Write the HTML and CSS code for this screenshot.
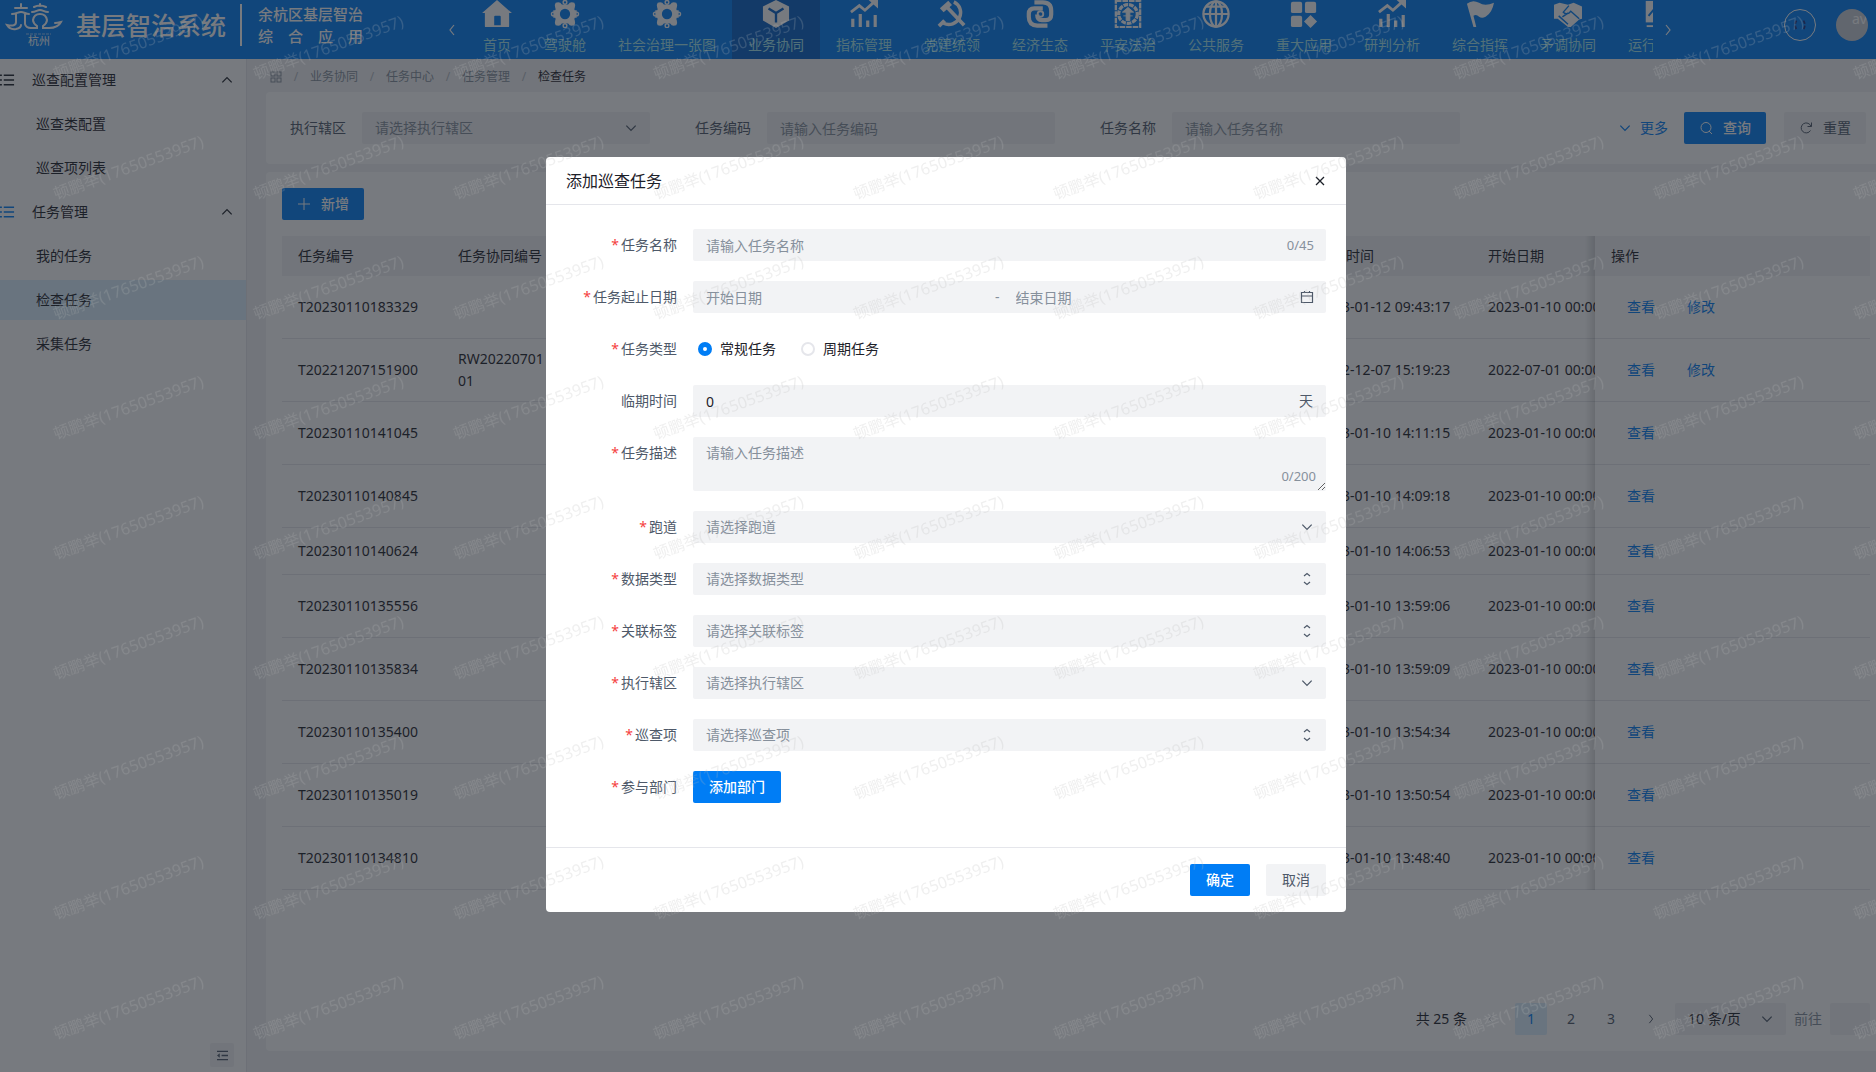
FILE: index.html
```html
<!DOCTYPE html>
<html lang="zh-CN">
<head>
<meta charset="utf-8">
<meta name="viewport" content="width=device-width, initial-scale=1">
<title>基层智治系统</title>
<link rel="stylesheet" href="styles.css">
</head>
<body>
<svg class="sprite" aria-hidden="true">
  <symbol id="i-down" viewBox="0 0 12 12"><path d="M2 4l4 4 4-4" fill="none" stroke="currentColor" stroke-width="1.1"/></symbol>
  <symbol id="i-up" viewBox="0 0 12 12"><path d="M2 8l4-4 4 4" fill="none" stroke="currentColor" stroke-width="1.1"/></symbol>
  <symbol id="i-left" viewBox="0 0 12 12"><path d="M8 1L4 6l4 5" fill="none" stroke="currentColor" stroke-width="1.2"/></symbol>
  <symbol id="i-right" viewBox="0 0 12 12"><path d="M4 1l4 5-4 5" fill="none" stroke="currentColor" stroke-width="1.2"/></symbol>
  <symbol id="i-updown" viewBox="0 0 14 18"><path d="M4 6l3-2.500L10 6M4 12l3 2.500 3-2.500" fill="none" stroke="currentColor" stroke-width="1.2"/></symbol>
  <symbol id="i-list" viewBox="0 0 16 14"><path d="M0 2h2M4 2h11M0 7h2M4 7h11M0 12h2M4 12h11" stroke="currentColor" stroke-width="1.6"/></symbol>
  <symbol id="i-gear" viewBox="0 0 30 30"><path fill="currentColor" fill-rule="evenodd" d="M5 3q3-1 5 0 1 2 3 2h4q2 0 3-2 2-1 5 0 1.500 2 .5 5-1 2 0 3h2v8h-2q-1 1 0 3 1 3-.5 5-3 1-5 0-1-2-3-2h-4q-2 0-3 2-2 1-5 0-1.500-2-.5-5 1-2 0-3h-2v-8h2q1-1 0-3-1-3 .5-5zM15 9.500a5.500 5.500 0 100 11 5.500 5.500 0 000-11z"/><g fill="none" stroke="currentColor" stroke-width="1.500"><circle cx="2.500" cy="15" r="2"/><circle cx="27.500" cy="15" r="2"/><circle cx="15" cy="2.500" r="2"/><circle cx="15" cy="27.500" r="2"/></g></symbol>
  <symbol id="i-chart" viewBox="0 0 30 30"><path d="M3 29V20M11 29V15M19 29V22M27 29V16" stroke="currentColor" stroke-width="3.400" fill="none"/><path d="M1 13l9-7 6 5 10-9" stroke="currentColor" stroke-width="3" fill="none"/><path d="M20 0h10v9z" fill="currentColor"/></symbol>
</svg>

<header class="topbar">
  <div class="brand">
    <svg class="brand-logo" viewBox="0 0 56 44" aria-hidden="true">
      <g fill="none" stroke="currentColor" stroke-width="2" stroke-linecap="round">
        <path d="M9 5h12M15 1v4M6 11c4 0 6-2 9-2s5 2 8 2M10 11v8q0 5-9 3 3 5 9 4 5-1 5-4M19 11v10q1 4 6 4"/>
        <path d="M28 4q6-3 12 0M34 1v2M26 9c4 0 5-2 8-2s4 2 8 2"/>
        <path d="M25 25h6v-2q-4-3-4-6 1-6 7-6t7 6q0 3-4 6v2h6q9 0 12-6-4 1-6 1"/>
      </g>
      <path d="M20 31h25" stroke="currentColor" stroke-width="1" stroke-dasharray="3 1" opacity=".6"/>
      <text x="22" y="42" class="logo-city">杭州</text>
    </svg>
    <strong class="brand-title">基层智治系统</strong>
    <div class="brand-sub">
      <span>余杭区基层智治</span>
      <span class="spread"><span>综</span><span>合</span><span>应</span><span>用</span></span>
    </div>
  </div>
  <button class="nav-arrow prev" aria-label="向左"><svg><use href="#i-left"/></svg></button>
  <nav class="nav">
    <a href="#"><svg viewBox="0 0 32 30"><path fill="currentColor" fill-rule="evenodd" d="M16 0L32 14h-3v14q0 1-1 1H4q-1 0-1-1V14H0zM14 17q-1 0-1 1v9h7v-9q0-1-1-1z"/></svg>首页</a>
    <a href="#"><svg><use href="#i-gear"/></svg>驾驶舱</a>
    <a href="#"><svg><use href="#i-gear"/></svg>社会治理一张图</a>
    <a href="#" class="active"><svg viewBox="0 0 30 30"><path fill="currentColor" d="M15 0l14 7v15l-14 8L1 22V7z"/><path class="cut" d="M7 9l8 5 8-5M15 14v10" fill="none" stroke-width="2.500"/></svg>业务协同</a>
    <a href="#"><svg><use href="#i-chart"/></svg>指标管理</a>
    <a href="#"><svg viewBox="0 0 30 30"><g fill="none" stroke="currentColor"><path d="M17 2a12.500 12.500 0 11-11 23" stroke-width="3.600"/><path d="M4 11l9-8" stroke-width="6"/><path d="M10 8l18 19" stroke-width="4"/><path d="M1 28l6-6" stroke-width="4"/></g></svg>党建统领</a>
    <a href="#"><svg viewBox="0 0 30 30"><g fill="none" stroke="currentColor" stroke-width="4.500"><path d="M9 2.500h9q9 0 9 9v4q0 6-6 6h-4q-5 0-5-6"/><path d="M18 9H9q-6 0-6 6v3q0 9 9 9.500h11"/></g><circle cx="15.500" cy="15" r="3" fill="none" stroke="currentColor" stroke-width="2"/></svg>经济生态</a>
    <a href="#"><svg viewBox="0 0 30 30"><rect x="2" y="1" width="26" height="28" fill="none" stroke="currentColor" stroke-width="2.500" stroke-dasharray="6 1"/><circle cx="15" cy="15" r="10" fill="none" stroke="currentColor" stroke-width="3.500" stroke-dasharray="5 1"/><path d="M15 8l6 5h-4v9h-4v-9H9zM10 17h10" fill="currentColor" stroke="currentColor"/></svg>平安法治</a>
    <a href="#"><svg viewBox="0 0 30 30"><g fill="none" stroke="currentColor" stroke-width="2.400"><circle cx="15" cy="15" r="13.500"/><ellipse cx="15" cy="15" rx="6.500" ry="13.500"/><path d="M15 1v28M1 15h28M4 7h22"/></g></svg>公共服务</a>
    <a href="#"><svg viewBox="0 0 30 30"><g fill="currentColor"><rect x="1" y="2" width="12" height="12" rx="2"/><rect x="16" y="2" width="12" height="12" rx="2"/><rect x="1" y="17" width="12" height="12" rx="2"/><path d="M22 16l7 7-7 7-7-7z"/></g></svg>重大应用</a>
    <a href="#"><svg><use href="#i-chart"/></svg>研判分析</a>
    <a href="#"><svg viewBox="0 0 30 30"><path fill="currentColor" d="M1 4q6-5 13-1 6 4 16 0-2 11-9 15-4 2-7 0-3-3-6-1l3 12H8z"/></svg>综合指挥</a>
    <a href="#"><svg viewBox="0 0 30 30"><path fill="currentColor" d="M0 5l6-2 9 2 6-2 9 4v13l-3 1-9 8h-3L4 20H0z"/><path d="M16 6l-6 7q4 4 8-1l9 8M5 17l10 9M9 18l6-4" class="cutline" fill="none" stroke-width="1.500"/></svg>矛调协同</a>
    <a href="#" class="wide"><svg viewBox="0 0 30 30"><path fill="currentColor" d="M4 1h22v23H4z"/><path class="cutline" d="M7 17l5-6 5 7 6-8" fill="none" stroke-width="2"/><path d="M5 28h20" stroke="currentColor" stroke-width="2"/></svg><span>运行</span></a>
  </nav>
  <button class="nav-arrow next" aria-label="向右"><svg><use href="#i-right"/></svg></button>
  <div class="user">
    <button class="round" aria-label="全屏"><svg viewBox="0 0 16 16"><path d="M4 3q-3 5 0 10M12 3q3 5 0 10" fill="none" stroke="currentColor" stroke-width="2" stroke-dasharray="4 2"/></svg></button>
    <span class="avatar"><span>av</span></span>
  </div>
</header>

<div class="layout">
  <aside class="sidebar">
    <button class="group"><svg class="list"><use href="#i-list"/></svg><span>巡查配置管理</span><svg class="chev"><use href="#i-up"/></svg></button>
    <a href="#">巡查类配置</a>
    <a href="#">巡查项列表</a>
    <button class="group"><svg class="list blue"><use href="#i-list"/></svg><span>任务管理</span><svg class="chev"><use href="#i-up"/></svg></button>
    <a href="#">我的任务</a>
    <a href="#" class="selected">检查任务</a>
    <a href="#">采集任务</a>
    <button class="collapse" aria-label="收起菜单"><svg viewBox="0 0 12 12"><path d="M0 1.500h12M5 6h7M0 10.500h12" stroke="currentColor" stroke-width="1.400"/><path d="M0 6l3-2.500v5z" fill="currentColor"/></svg></button>
  </aside>

  <main class="main">
    <nav class="crumbs">
      <svg viewBox="0 0 12 12"><g fill="none" stroke="currentColor"><rect x="1" y="1" width="4" height="4"/><rect x="7" y="1" width="4" height="4"/><rect x="1" y="7" width="4" height="4"/><rect x="7" y="7" width="4" height="4"/></g></svg>
      <i>/</i><a href="#">业务协同</a><i>/</i><a href="#">任务中心</a><i>/</i><a href="#">任务管理</a><i>/</i><b>检查任务</b>
    </nav>

    <form class="filters">
      <div class="filter"><label for="f-area">执行辖区</label><span class="control"><select id="f-area"><option>请选择执行辖区</option></select><svg class="arrow"><use href="#i-down"/></svg></span></div>
      <div class="filter"><label for="f-code">任务编码</label><span class="control"><input id="f-code" placeholder="请输入任务编码"></span></div>
      <div class="filter"><label for="f-name">任务名称</label><span class="control"><input id="f-name" placeholder="请输入任务名称"></span></div>
      <div class="filter-actions">
        <button type="button" class="more"><svg><use href="#i-down"/></svg>更多</button>
        <button type="button" class="btn primary icon"><svg viewBox="0 0 14 14"><circle cx="7" cy="6.500" r="5" fill="none" stroke="currentColor"/><path d="M10 10l3 3" stroke="currentColor"/></svg>查询</button>
        <button type="button" class="btn icon"><svg viewBox="0 0 14 14"><path d="M11.500 9.500a5 5 0 11.500-4M12.500 1.500v4h-4" fill="none" stroke="currentColor"/></svg>重置</button>
      </div>
    </form>

    <section class="panel">
      <div><button class="btn primary icon"><svg viewBox="0 0 14 14"><path d="M7 1v12M1 7h12" stroke="currentColor"/></svg>新增</button></div>
      <div class="table-wrap">
        <table>
          <colgroup><col class="c-code"><col class="c-code"><col><col class="c-time"><col class="c-time"><col class="c-act"></colgroup>
          <thead><tr><th>任务编号</th><th>任务协同编号</th><th></th><th>更新时间</th><th>开始日期</th><th class="act">操作</th></tr></thead>
          <tbody>
            <tr><td>T20230110183329</td><td></td><td></td><td>2023-01-12 09:43:17</td><td>2023-01-10 00:00:00</td><td class="act"><a href="#">查看</a><a href="#">修改</a></td></tr>
            <tr><td>T20221207151900</td><td>RW20220701<br>01</td><td></td><td>2022-12-07 15:19:23</td><td>2022-07-01 00:00:00</td><td class="act"><a href="#">查看</a><a href="#">修改</a></td></tr>
            <tr><td>T20230110141045</td><td></td><td></td><td>2023-01-10 14:11:15</td><td>2023-01-10 00:00:00</td><td class="act"><a href="#">查看</a></td></tr>
            <tr><td>T20230110140845</td><td></td><td></td><td>2023-01-10 14:09:18</td><td>2023-01-10 00:00:00</td><td class="act"><a href="#">查看</a></td></tr>
            <tr class="short"><td>T20230110140624</td><td></td><td></td><td>2023-01-10 14:06:53</td><td>2023-01-10 00:00:00</td><td class="act"><a href="#">查看</a></td></tr>
            <tr><td>T20230110135556</td><td></td><td></td><td>2023-01-10 13:59:06</td><td>2023-01-10 00:00:00</td><td class="act"><a href="#">查看</a></td></tr>
            <tr><td>T20230110135834</td><td></td><td></td><td>2023-01-10 13:59:09</td><td>2023-01-10 00:00:00</td><td class="act"><a href="#">查看</a></td></tr>
            <tr><td>T20230110135400</td><td></td><td></td><td>2023-01-10 13:54:34</td><td>2023-01-10 00:00:00</td><td class="act"><a href="#">查看</a></td></tr>
            <tr><td>T20230110135019</td><td></td><td></td><td>2023-01-10 13:50:54</td><td>2023-01-10 00:00:00</td><td class="act"><a href="#">查看</a></td></tr>
            <tr><td>T20230110134810</td><td></td><td></td><td>2023-01-10 13:48:40</td><td>2023-01-10 00:00:00</td><td class="act"><a href="#">查看</a></td></tr>
          </tbody>
        </table>
      </div>
      <div class="pager">
        <span class="total">共 25 条</span>
        <button class="page" disabled aria-label="上一页"><svg><use href="#i-left"/></svg></button>
        <button class="page current">1</button>
        <button class="page">2</button>
        <button class="page">3</button>
        <button class="page" aria-label="下一页"><svg><use href="#i-right"/></svg></button>
        <span class="control size"><select aria-label="每页条数"><option>10 条/页</option></select><svg class="arrow"><use href="#i-down"/></svg></span>
        <label class="jump">前往<input></label>
      </div>
    </section>
  </main>
</div>

<div class="mask">
  <section class="modal" role="dialog" aria-labelledby="dlg-title">
    <header class="modal-head"><h2 id="dlg-title">添加巡查任务</h2><button class="close" aria-label="关闭"><svg viewBox="0 0 12 12"><path d="M2 2l8 8M10 2l-8 8" stroke="currentColor" stroke-width="1.300"/></svg></button></header>
    <form class="modal-body">
      <div class="row"><label class="req" for="m-name">任务名称</label><span class="control"><input id="m-name" placeholder="请输入任务名称"><span class="count">0/45</span></span></div>
      <div class="row"><label class="req" for="m-start">任务起止日期</label><span class="control range"><input id="m-start" placeholder="开始日期"><span>-</span><input placeholder="结束日期" aria-label="结束日期"><svg class="cal" viewBox="0 0 14 14"><path d="M1.500 2.500h11v10h-11zM1.500 6h11M4.500 1v2M9.500 1v2" fill="none" stroke="currentColor" stroke-width="1.200"/></svg></span></div>
      <div class="row"><span class="label req">任务类型</span><div class="radios"><label><input type="radio" name="type" checked>常规任务</label><label><input type="radio" name="type">周期任务</label></div></div>
      <div class="row"><label for="m-due">临期时间</label><span class="control"><input id="m-due" value="0"><span class="unit">天</span></span></div>
      <div class="row"><label class="req" for="m-desc">任务描述</label><span class="control area"><textarea id="m-desc" placeholder="请输入任务描述"></textarea><span class="count">0/200</span></span></div>
      <div class="row"><label class="req" for="m-track">跑道</label><span class="control"><select id="m-track"><option>请选择跑道</option></select><svg class="arrow"><use href="#i-down"/></svg></span></div>
      <div class="row"><label class="req" for="m-data">数据类型</label><span class="control"><select id="m-data"><option>请选择数据类型</option></select><svg class="arrow tall"><use href="#i-updown"/></svg></span></div>
      <div class="row"><label class="req" for="m-tag">关联标签</label><span class="control"><select id="m-tag"><option>请选择关联标签</option></select><svg class="arrow tall"><use href="#i-updown"/></svg></span></div>
      <div class="row"><label class="req" for="m-area">执行辖区</label><span class="control"><select id="m-area"><option>请选择执行辖区</option></select><svg class="arrow"><use href="#i-down"/></svg></span></div>
      <div class="row"><label class="req" for="m-item">巡查项</label><span class="control"><select id="m-item"><option>请选择巡查项</option></select><svg class="arrow tall"><use href="#i-updown"/></svg></span></div>
      <div class="row"><span class="label req">参与部门</span><button type="button" class="btn primary">添加部门</button></div>
    </form>
    <footer class="modal-foot"><button class="btn primary">确定</button><button class="btn">取消</button></footer>
  </section>
</div>

<svg class="watermark" aria-hidden="true">
  <defs><pattern id="wm" x="30" y="0" width="200" height="120" patternUnits="userSpaceOnUse">
    <text transform="translate(26 80) rotate(-20)">顿鹏举(17650553957)</text>
  </pattern></defs>
  <rect x="30" width="100%" height="100%" fill="url(#wm)"/>
</svg>
</body>
</html>
```
FILE: styles.css
```css
:root {
  --primary: #007df5;
  --text: #1d2129;
  --text-2: #4e5969;
  --text-3: #86909c;
  --fill: #f2f3f5;
  --line: #e5e6eb;
  --mask: rgba(29, 33, 41, 0.6);
}

* { box-sizing: border-box; }

body {
  margin: 0;
  height: 100vh;
  display: flex;
  flex-direction: column;
  overflow: hidden;
  font: 14px/22px "Noto Sans", "Noto Sans CJK SC", sans-serif;
  color: var(--text);
}

button, input, select, textarea { font: inherit; color: inherit; border: 0; margin: 0; background: none; }
button { padding: 0; cursor: pointer; }
a { color: inherit; text-decoration: none; }
svg { display: block; flex: none; }
.sprite { position: absolute; width: 0; height: 0; }

/* top bar */
.topbar { flex: none; height: 59px; display: flex; background: var(--primary); color: #fff; }
.brand { width: 446px; height: 50px; flex: none; display: flex; align-items: center; padding-left: 6px; }
.brand-logo { width: 56px; height: 44px; overflow: visible; }
.logo-city { font-size: 11px; fill: currentColor; }
.brand-title { margin-left: 14px; padding-right: 14px; border-right: 2px solid #fff; font-size: 25px; line-height: 42px; font-weight: 500; }
.brand-sub { margin-left: 16px; display: flex; flex-direction: column; font-size: 15px; font-weight: 500; }
.spread { display: flex; justify-content: space-between; }
.nav-arrow { flex: none; display: flex; align-items: center; }
.nav-arrow svg { width: 12px; height: 12px; }
.prev { width: 20px; }
.next { width: 31px; padding-left: 9px; }
.nav { flex: 1; min-width: 0; display: flex; overflow: hidden; }
.nav a { flex: none; display: flex; flex-direction: column; align-items: center; gap: 6px; padding: 0 16px; color: #a2e6f0; }
.nav .wide { width: 88px; }
.wide span { align-self: flex-start; }
.nav svg { width: 30px; height: 28px; color: #fff; }
.nav .active { background: #055fc6; }
.cut { stroke: #055fc6; }
.cutline { stroke: var(--primary); }
.user { width: 192px; height: 50px; flex: none; display: flex; align-items: center; justify-content: flex-end; gap: 20px; padding-right: 8px; }
.round { width: 32px; height: 32px; display: grid; place-items: center; border: 1px solid #fff; border-radius: 50%; color: #1d2f7a; }
.round svg { width: 14px; height: 14px; }
.avatar { width: 32px; height: 32px; border-radius: 50%; background: #c9cdd4; color: #fff; overflow: hidden; line-height: 20px; }
.avatar span { display: block; padding-left: 16px; }

/* side menu */
.layout { flex: 1; min-height: 0; display: flex; background: var(--fill); }
.sidebar { width: 247px; flex: none; display: flex; flex-direction: column; gap: 4px; padding: 1px 0 5px; background: #fff; border-right: 1px solid var(--line); }
.sidebar a { padding: 9px 36px; }
.sidebar .selected { background: #dcf1ff; }
.group { height: 40px; display: flex; align-items: center; padding-right: 12px; text-align: left; }
.group span { flex: 1; padding-left: 17px; }
.list { width: 15px; height: 14px; }
.blue { color: var(--primary); }
.chev { width: 14px; height: 14px; }
.collapse { width: 24px; height: 24px; margin: auto 12px 0 auto; display: grid; place-items: center; background: var(--fill); border-radius: 2px; color: var(--text-2); }
.collapse svg { width: 11px; height: 11px; }

/* content */
.main { flex: 1; min-width: 0; display: flex; flex-direction: column; padding: 0 0 21px 19px; }
.crumbs { height: 33px; display: flex; align-items: center; padding: 2px 0 0 4px; font-size: 12px; color: var(--text-3); }
.crumbs svg { width: 12px; height: 12px; }
.crumbs i { width: 28px; text-align: center; font-style: normal; color: #b5bac2; }
.crumbs b { font-weight: 400; color: var(--text); }

.control { position: relative; display: flex; align-items: center; min-width: 0; height: 32px; background: var(--fill); border-radius: 2px; }
.control input, .control select { flex: 1; width: 100%; min-width: 0; height: 32px; padding: 0 13px; appearance: none; outline: 0; }
.control select { color: var(--text-3); }
::placeholder { color: var(--text-3); opacity: 1; }
.arrow { position: absolute; right: 12px; width: 14px; height: 14px; color: var(--text-2); pointer-events: none; }
.tall { height: 18px; }

.btn { height: 32px; padding: 0 16px; border-radius: 2px; background: var(--fill); color: var(--text-2); }
.primary { background: var(--primary); color: #fff; font-weight: 500; }
.icon { display: inline-flex; align-items: center; gap: 10px; padding: 0 15px; }
.icon svg { width: 14px; height: 14px; }

.filters { display: flex; align-items: center; gap: 45px; padding: 20px 10px 20px 24px; background: #fff; border-radius: 4px 0 0 4px; }
.filter { display: flex; align-items: center; gap: 16px; color: var(--text-2); }
.filter .control { width: 288px; color: var(--text); }
.filter-actions { margin-left: auto; display: flex; align-items: center; }
.filter-actions .primary { margin: 0 18px 0 16px; }
.more { display: flex; align-items: center; gap: 8px; color: var(--primary); }
.more svg { width: 14px; height: 14px; }

.panel { flex: 1; margin-top: 8px; display: flex; flex-direction: column; padding: 16px 6px 16px 16px; background: #fff; border-radius: 4px 0 0 4px; }
.table-wrap { margin-top: 16px; overflow: hidden; }
table { width: calc(100% + 47px); table-layout: fixed; border-collapse: separate; border-spacing: 0; }
.c-code { width: 160px; }
.c-time { width: 170px; }
.c-act { width: 275px; }
th { height: 40px; padding: 0 16px; text-align: left; font-weight: 400; background: var(--fill); }
td { height: 63px; padding: 0 16px; border-bottom: 1px solid var(--line); white-space: nowrap; }
.short td { height: 47px; }
td.act, th.act { position: sticky; right: 0; }
td.act { background: #fff; padding-left: 32px; }
.act::before { content: ""; position: absolute; top: 0; bottom: 0; left: -10px; width: 10px; background: linear-gradient(to left, rgba(0, 0, 0, 0.14), transparent); }
td.act::before { bottom: -1px; }
.act a { margin-right: 32px; color: var(--primary); }

.pager { margin-top: auto; display: flex; align-items: center; justify-content: flex-end; gap: 8px; }
.page { width: 32px; height: 32px; display: grid; place-items: center; border-radius: 2px; color: var(--text-2); }
.page svg { width: 12px; height: 10px; }
.page:disabled { color: #c9cdd4; }
.current { background: #dcf1ff; color: var(--primary); }
.size { width: 111px; }
.size select { color: var(--text); }
.jump { display: flex; align-items: center; gap: 8px; color: var(--text-3); }
.jump input { width: 40px; height: 32px; background: var(--fill); border-radius: 2px; }

/* dialog */
.mask { position: fixed; inset: 0; display: flex; justify-content: center; align-items: flex-start; padding: 157px 0 24px 16px; background: var(--mask); }
.modal { width: 800px; max-width: 100%; background: #fff; border-radius: 4px; }
.modal-head { height: 48px; display: flex; align-items: center; justify-content: space-between; padding: 0 20px; border-bottom: 1px solid var(--line); }
.modal-head h2 { margin: 0; font-size: 16px; font-weight: 400; }
.close svg { width: 12px; height: 12px; }
.modal-body { display: flex; flex-direction: column; gap: 20px; padding: 24px 20px 44px; }
.row { display: grid; grid-template-columns: 111px 1fr; column-gap: 16px; }
.row > .btn { justify-self: start; }
.row > label, .label { padding: 5px 0; text-align: right; color: var(--text-2); }
.req::before { content: "*"; margin-right: 2px; color: #f53f3f; }
.count { padding-right: 12px; font-size: 13px; color: var(--text-3); }
.unit { padding-right: 13px; color: var(--text-2); }
.range { color: var(--text-3); }
.range input:first-child { flex: none; width: 302px; }
.range input + span + input { padding-left: 16px; }
.cal { width: 14px; height: 14px; margin-right: 12px; color: var(--text-2); }
.radios { display: flex; align-items: center; gap: 25px; padding-left: 5px; }
.radios label { display: flex; align-items: center; gap: 8px; }
.radios input { appearance: none; width: 14px; height: 14px; border: 2px solid var(--line); border-radius: 50%; }
.radios input:checked { border: 5px solid var(--primary); }
.area { height: auto; }
.area textarea { display: block; width: 100%; height: 54px; padding: 5px 13px; resize: vertical; outline: 0; }
.area .count { position: absolute; right: 0; bottom: 4px; padding-right: 10px; pointer-events: none; }
.modal-foot { display: flex; justify-content: flex-end; gap: 16px; padding: 16px 20px; border-top: 1px solid var(--line); }

.watermark { position: fixed; inset: 0; width: 100%; height: 100%; pointer-events: none; }
.watermark text { font-size: 16px; fill: rgba(184, 184, 184, 0.22); }
```
